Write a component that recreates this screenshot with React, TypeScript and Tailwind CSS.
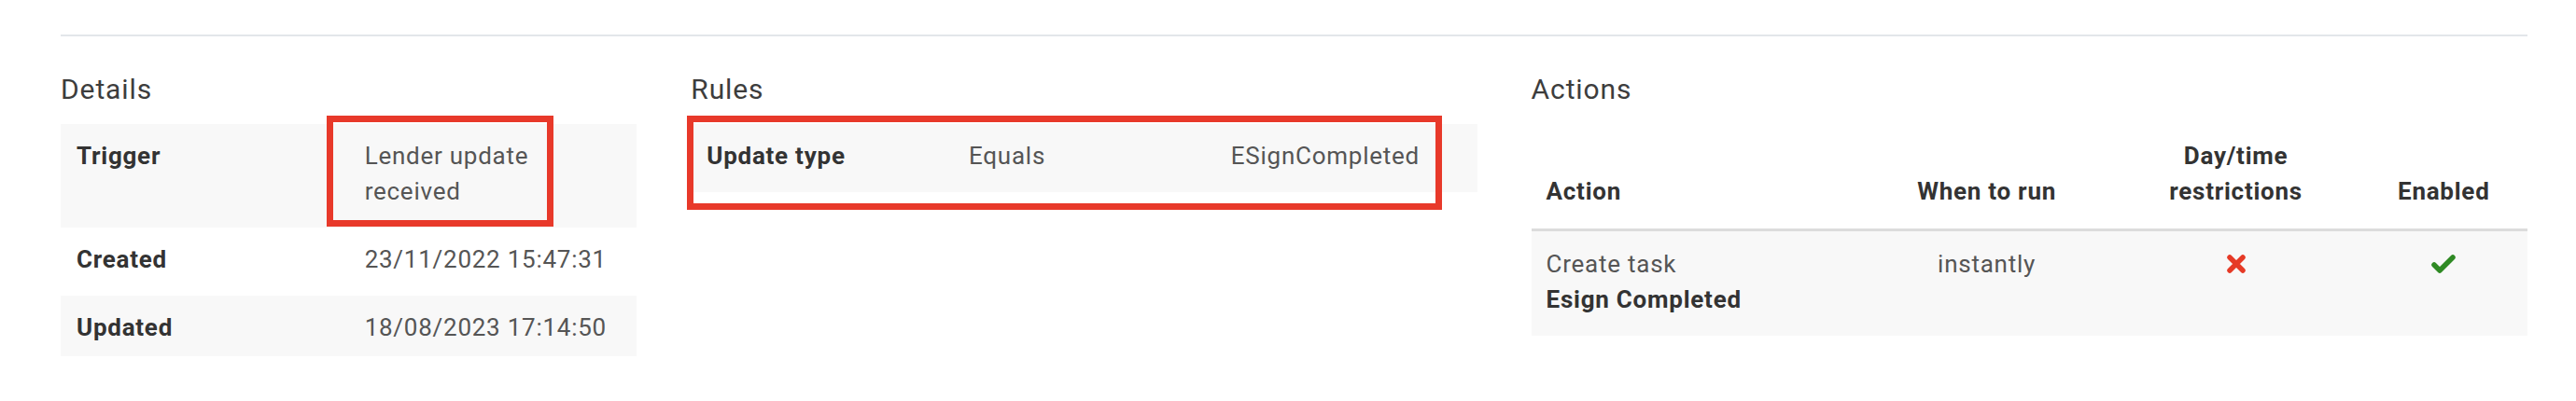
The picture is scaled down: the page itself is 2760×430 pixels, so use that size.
const detailRows = [
  { label: 'Trigger', value: ['Lender update', 'received'], height: 'h-[111px]', striped: true, marked: true },
  { label: 'Created', value: ['23/11/2022 15:47:31'], height: 'h-[73px]', striped: false, marked: false },
  { label: 'Updated', value: ['18/08/2023 17:14:50'], height: 'h-[65px]', striped: true, marked: false },
];

function CrossIcon() {
  return (
    <svg width="22" height="22" viewBox="0 0 22 22">
      <path d="M4 4 L18 18 M18 4 L4 18" stroke="#e63a26" strokeWidth="5.5" strokeLinecap="round" fill="none" />
    </svg>
  );
}

function CheckIcon() {
  return (
    <svg width="28" height="22" viewBox="0 0 28 22">
      <polyline
        points="4,12 10,18 24,4"
        stroke="#2f8a24"
        strokeWidth="5.5"
        strokeLinecap="round"
        strokeLinejoin="round"
        fill="none"
      />
    </svg>
  );
}

function Heading({ children }: { children: string }) {
  return <h2 className="text-[30px] leading-[36px] tracking-[0.9px] text-[#3d3d3d] mb-[19px]">{children}</h2>;
}

function Details() {
  return (
    <section className="col-span-3">
      <Heading>Details</Heading>
      <div className="flex flex-col">
        {detailRows.map((row) => (
          <div key={row.label} className={`grid grid-cols-2 ${row.height} ${row.striped ? 'bg-[#f8f8f8]' : 'bg-white'}`}>
            <div className="px-[17px] pt-[15px] font-bold text-[#333]">{row.label}</div>
            <div className="relative px-[17px] pt-[15px] text-[#555]">
              {row.value.map((line) => (
                <div key={line}>{line}</div>
              ))}
              {row.marked && (
                <div className="absolute left-[-24px] top-[-9px] w-[243px] h-[119px] border-[7px] border-[#e8392a]" />
              )}
            </div>
          </div>
        ))}
      </div>
    </section>
  );
}

function Rules() {
  return (
    <section className="col-span-4">
      <Heading>Rules</Heading>
      <div className="relative grid grid-cols-3 h-[73px] bg-[#f8f8f8]">
        <div className="px-[17px] pt-[15px] font-bold text-[#333]">Update type</div>
        <div className="px-[17px] pt-[15px] text-[#555]">Equals</div>
        <div className="px-[17px] pt-[15px] text-[#555]">ESignCompleted</div>
        <div className="absolute left-[-4px] top-[-9px] w-[809px] h-[101px] border-[7px] border-[#e8392a]" />
      </div>
    </section>
  );
}

function Actions() {
  return (
    <section className="col-span-5">
      <Heading>Actions</Heading>
      <div className="grid grid-cols-[354px_268px_266px_1fr] font-bold text-[#333] border-b-[3px] border-[#dcdcdc] pt-[15px] pb-[21px]">
        <div className="px-[16px] self-end">Action</div>
        <div className="px-[16px] self-end text-center">When to run</div>
        <div className="px-[16px] self-end text-center">
          Day/time
          <br />
          restrictions
        </div>
        <div className="px-[16px] self-end text-center">Enabled</div>
      </div>
      <div className="grid grid-cols-[354px_268px_266px_1fr] h-[112px] bg-[#f8f8f8] pt-[16px]">
        <div className="px-[16px]">
          <div className="text-[#555]">Create task</div>
          <div className="font-bold text-[#333]">Esign Completed</div>
        </div>
        <div className="px-[16px] text-center text-[#555]">instantly</div>
        <div className="flex justify-center items-center h-[38px]">
          <CrossIcon />
        </div>
        <div className="flex justify-center items-center h-[38px]">
          <CheckIcon />
        </div>
      </div>
    </section>
  );
}

export default function App() {
  return (
    <div className="w-[2760px] h-[430px] bg-white [font-family:Roboto,sans-serif] text-[26px] leading-[38px] tracking-[0.75px]">
      <div className="ml-[65px] w-[2643px] pt-[37px]">
        <div className="h-[2px] bg-[#e3e6ea]" />
        <div className="grid grid-cols-12 gap-x-[58px] mt-[39px]">
          <Details />
          <Rules />
          <Actions />
        </div>
      </div>
    </div>
  );
}
